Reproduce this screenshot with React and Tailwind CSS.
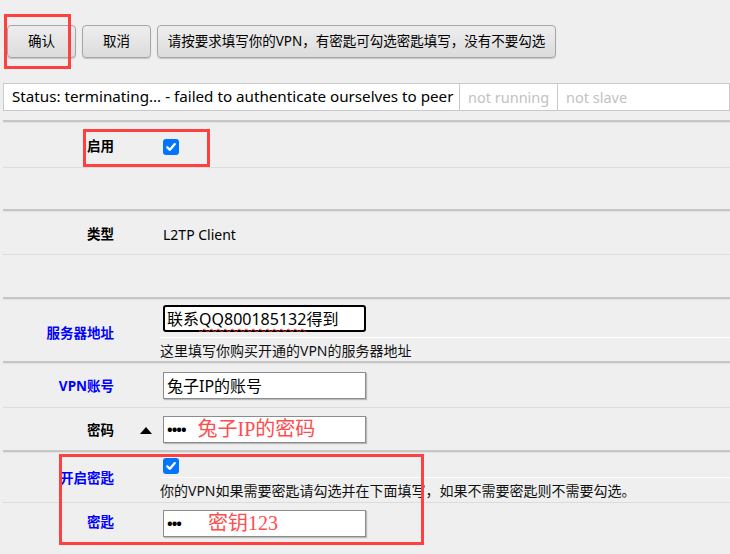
import React from "react";

function Btn({ w, children }) {
  return (
    <div
      className={`${w} h-[33px] flex items-center justify-center rounded-[4px] border border-[#a6a6a6] bg-gradient-to-b from-[#eeeeee] to-[#dcdcdc] shadow-[0_1px_1px_rgba(0,0,0,0.18)] text-[13.5px] text-black leading-none`}
    >
      {children}
    </div>
  );
}

function Check() {
  return (
    <div className="w-[16px] h-[16px] rounded-[3px] bg-[#0075ff] flex items-center justify-center">
      <svg width="12" height="12" viewBox="0 0 12 12">
        <path
          d="M2.3 6.3 L4.9 8.8 L9.8 3.1"
          fill="none"
          stroke="white"
          strokeWidth="2.3"
          strokeLinecap="round"
          strokeLinejoin="round"
        />
      </svg>
    </div>
  );
}

function Double() {
  return (
    <div>
      <div className="h-[2px] bg-[#c6c6c6]" />
      <div className="h-px bg-[#e2e2e2]" />
    </div>
  );
}

function Single() {
  return <div className="h-px bg-[#dcdcdc]" />;
}

function Label({ blue, children, extra = "" }) {
  return (
    <div
      className={`w-[111px] shrink-0 text-right text-[13.5px] font-bold leading-none ${
        blue ? "text-[#0000ff]" : "text-black"
      } ${extra}`}
    >
      {children}
    </div>
  );
}

function Input({ children }) {
  return (
    <div className="ml-[3px] w-[203px] h-[27px] shrink-0 bg-white border border-[#8c8c8c] shadow-[1px_1px_1px_rgba(0,0,0,0.22)] flex items-center pl-[3px] text-[16px] leading-none text-black">
      {children}
    </div>
  );
}

const red = "text-[20px] leading-none text-[#ff4d4d] font-['Liberation_Serif','Noto_Sans_CJK_SC',serif]";

export default function App() {
  return (
    <div className="relative w-[730px] h-[554px] overflow-hidden bg-[#efefef] text-black font-['Noto_Sans','Noto_Sans_CJK_SC',sans-serif]">
      {/* buttons */}
      <div className="flex gap-[6px] pl-[7px] pt-[25px]">
        <Btn w="w-[69px]">确认</Btn>
        <Btn w="w-[69px]">取消</Btn>
        <Btn w="w-[399px]">请按要求填写你的VPN，有密匙可勾选密匙填写，没有不要勾选</Btn>
      </div>

      {/* status bar */}
      <div className="ml-[3px] mt-[25px] flex h-[28px] border border-[#c9c9c9] bg-white leading-none">
        <div className="w-[456px] shrink-0 border-r border-[#c9c9c9] pl-[8px] flex items-center whitespace-nowrap text-[15.2px]">
          Status: terminating... - failed to authenticate ourselves to peer
        </div>
        <div className="w-[98px] shrink-0 border-r border-[#c9c9c9] pl-[8px] flex items-center text-[#c2c2c2] whitespace-nowrap text-[14.5px]">
          not running
        </div>
        <div className="pl-[8px] flex items-center text-[#c2c2c2] whitespace-nowrap text-[14.5px]">not slave</div>
      </div>

      {/* form */}
      <div className="ml-[3px] mt-[9px]">
        <Double />
        {/* 启用 */}
        <div className="h-[44px] flex items-center pt-[3px]">
          <Label>启用</Label>
          <div className="w-[46px] shrink-0" />
          <div className="ml-[3px]">
            <Check />
          </div>
        </div>
        <Single />
        <div className="h-[41px]" />
        <Double />
        {/* 类型 */}
        <div className="h-[42px] flex items-center pt-[3px]">
          <Label>类型</Label>
          <div className="w-[46px] shrink-0" />
          <div className="ml-[3px] text-[14px] leading-none">L2TP Client</div>
        </div>
        <Single />
        <div className="h-[42px]" />
        <Double />
        {/* 服务器地址 */}
        <div className="h-[61px] flex">
          <Label blue extra="self-center pt-[6px]">服务器地址</Label>
          <div className="w-[46px] shrink-0" />
          <div className="flex-1 flex flex-col pt-[5px]">
            <div className="ml-[3px] w-[203px] h-[27px] bg-white border-2 border-black rounded-[3px] flex items-center pl-[2px] text-[16px] leading-none">
              联系<span className="underline decoration-wavy decoration-[#ff3030] decoration-1 underline-offset-[3px]">QQ800185132</span>得到
            </div>
            <div className="mt-[5px] h-px bg-white" />
            <div className="flex-1 flex items-center pt-[3px] text-[14px] leading-none text-[#111]">
              这里填写你购买开通的VPN的服务器地址
            </div>
          </div>
        </div>
        <Double />
        {/* VPN账号 */}
        <div className="h-[43px] flex items-center">
          <Label blue extra="pt-[2px]">VPN账号</Label>
          <div className="w-[46px] shrink-0" />
          <Input>兔子IP的账号</Input>
        </div>
        <Single />
        {/* 密码 */}
        <div className="h-[42px] flex items-center">
          <Label extra="pt-[3px]">密码</Label>
          <div className="w-[46px] shrink-0 pl-[26px] pt-[3px] flex items-center">
            <svg width="12" height="7" viewBox="0 0 12 7">
              <path d="M0 7 L6 0 L12 7 Z" fill="black" />
            </svg>
          </div>
          <Input>
            <span className="text-[15px] font-bold tracking-[-1px]">••••</span>
            <span className={`ml-[12px] ${red}`}>兔子IP的密码</span>
          </Input>
        </div>
        <Double />
        {/* 开启密匙 */}
        <div className="h-[49px] flex">
          <Label blue extra="self-center pt-[3px]">开启密匙</Label>
          <div className="w-[46px] shrink-0" />
          <div className="flex-1 flex flex-col pt-[5px]">
            <div className="ml-[3px]">
              <Check />
            </div>
            <div className="mt-[3px] h-px bg-white" />
            <div className="flex-1 flex items-center pt-[2px] text-[14px] leading-none text-[#111]">
              你的VPN如果需要密匙请勾选并在下面填写，如果不需要密匙则不需要勾选。
            </div>
          </div>
        </div>
        <Single />
        {/* 密匙 */}
        <div className="h-[40px] flex items-center">
          <Label blue>密匙</Label>
          <div className="w-[46px] shrink-0" />
          <Input>
            <span className="text-[15px] font-bold tracking-[-1px]">•••</span>
            <span className={`ml-[27px] ${red}`}>密钥123</span>
          </Input>
        </div>
      </div>

      {/* red annotation boxes */}
      <div className="absolute left-[4px] top-[14px] w-[67px] h-[55px] border-[3px] border-[#ff4040]" />
      <div className="absolute left-[83px] top-[129px] w-[127px] h-[38px] border-[3px] border-[#ff4040]" />
      <div className="absolute left-[59px] top-[454px] w-[365px] h-[91px] border-[3px] border-[#ff4040]" />
    </div>
  );
}
